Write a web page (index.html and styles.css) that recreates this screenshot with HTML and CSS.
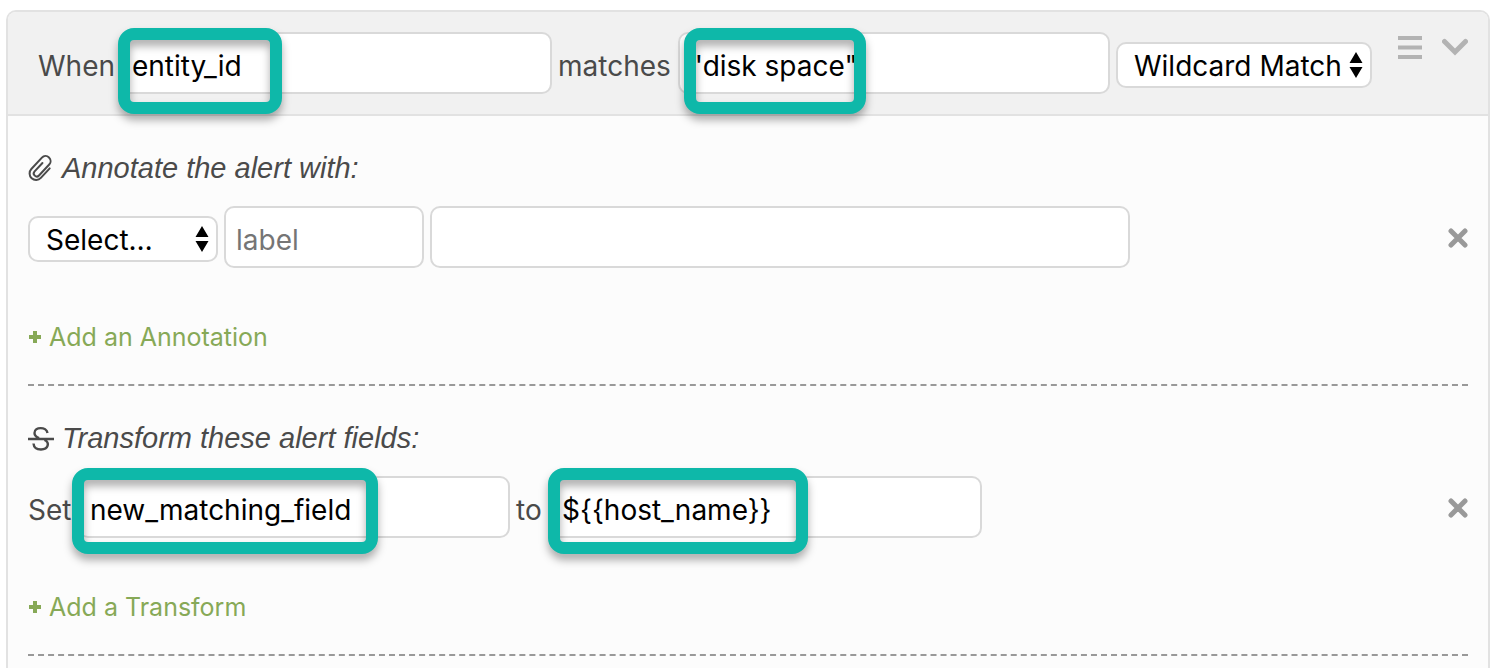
FILE: index.html
```html
<!DOCTYPE html>
<html lang="en">
<head>
<meta charset="utf-8">
<title>Alert rule</title>
<link rel="stylesheet" href="styles.css">
</head>
<body>
<main class="rule">
  <header class="rule-header">
    <div class="row">
      <label class="label-when" for="match-field">When</label>
      <div class="field">
        <input class="text-input" id="match-field" type="text" value="entity_id">
        <span class="highlight highlight-entity"></span>
      </div>
      <label class="label-matches" for="match-value">matches</label>
      <div class="field">
        <input class="text-input" id="match-value" type="text" value="&quot;disk space&quot;">
        <span class="highlight highlight-disk"></span>
      </div>
      <div class="picker picker-match">
        <select class="select" aria-label="Match type"><option>Wildcard Match</option></select>
        <svg class="arrows" viewBox="0 0 14 26" aria-hidden="true"><path d="M7 0l6.500 11H.5zM7 26L.5 15h13z"/></svg>
      </div>
    </div>
    <div class="tools">
      <button class="icon-button" type="button" aria-label="Reorder">
        <svg class="icon-menu" viewBox="0 0 24 24"><path d="M0 2h24M0 11.500h24M0 21h24"/></svg>
      </button>
      <button class="icon-button" type="button" aria-label="Collapse">
        <svg class="icon-chevron" viewBox="0 0 26 24"><path d="M2.500 5.500L13 16 23.500 5.500"/></svg>
      </button>
    </div>
  </header>

  <section class="section">
    <h2 class="title">
      <svg class="icon-title icon-clip" viewBox="0 0 26 28" aria-hidden="true"><path d="M7-6V7A6.500 6.500 0 0 1-6 7V-8.500a5 5 0 0 1 10 0V6.500a3 3 0 0 1-6 0V-5" transform="translate(12.500 14) rotate(43)"/></svg>
      Annotate the alert with:
    </h2>
    <div class="row">
      <div class="picker picker-kind">
        <select class="select" aria-label="Annotation type"><option>Select…</option></select>
        <svg class="arrows" viewBox="0 0 14 26" aria-hidden="true"><path d="M7 0l6.500 11H.5zM7 26L.5 15h13z"/></svg>
      </div>
      <div class="field field-label"><input class="text-input" type="text" placeholder="label" aria-label="Annotation label"></div>
      <div class="field field-value"><input class="text-input" type="text" aria-label="Annotation value"></div>
      <button class="icon-button remove" type="button" aria-label="Remove annotation">
        <svg class="icon-remove" viewBox="0 0 20 20"><path d="M3 3l14 14M17 3L3 17"/></svg>
      </button>
    </div>
    <a class="add" href="#"><svg class="icon-plus" viewBox="0 0 14 14" aria-hidden="true"><path d="M7 1v12M1 7h12"/></svg>Add an Annotation</a>
  </section>

  <section class="section">
    <h2 class="title">
      <svg class="icon-title" viewBox="0 0 26 28" aria-hidden="true"><path d="M0 15h26M19.500 9C18.500 2.500 6.500 2.500 6.500 9c0 2.500 1.800 4 4.500 5.200M16.500 16c5.500 2.500 4 9.500-3.500 9.500-4.500 0-7.200-2.500-7.500-6" stroke-width="2.400"/></svg>
      Transform these alert fields:
    </h2>
    <div class="row">
      <label class="label-set" for="target-field">Set</label>
      <div class="field">
        <input class="text-input" id="target-field" type="text" value="new_matching_field">
        <span class="highlight highlight-target"></span>
      </div>
      <label class="label-to" for="target-value">to</label>
      <div class="field">
        <input class="text-input" id="target-value" type="text" value="${{host_name}}">
        <span class="highlight highlight-host"></span>
      </div>
      <button class="icon-button remove" type="button" aria-label="Remove transform">
        <svg class="icon-remove" viewBox="0 0 20 20"><path d="M3 3l14 14M17 3L3 17"/></svg>
      </button>
    </div>
    <a class="add" href="#"><svg class="icon-plus" viewBox="0 0 14 14" aria-hidden="true"><path d="M7 1v12M1 7h12"/></svg>Add a Transform</a>
  </section>
  <div class="tail"></div>
</main>
</body>
</html>
```
FILE: styles.css
```css
* { box-sizing: border-box; }

html { overflow: hidden; }

body {
  margin: 0;
  padding: 10px 6px 0;
  background: #fff;
  color: #4a4a4a;
  font: 28px/36px Inter, "Liberation Sans", sans-serif;
}

.rule {
  border: 2px solid #e2e2e2;
  border-bottom: 0;
  border-radius: 10px 10px 0 0;
  background: #fcfcfc;
}

.rule-header {
  display: flex;
  justify-content: space-between;
  padding: 20px 20px 20px 30px;
  border-bottom: 2px solid #e2e2e2;
  border-radius: 8px 8px 0 0;
  background: #f1f1f1;
}

.row {
  display: flex;
  align-items: baseline;
}

.label-when { width: 82px; }
.label-matches { width: 126px; padding-left: 6px; }
.label-set { width: 50px; }
.label-to { width: 40px; padding-left: 6px; }

.field {
  position: relative;
  width: 432px;
}
.field-label { width: 200px; margin: 0 6px; }
.field-value { width: 700px; }

.text-input,
.select {
  display: block;
  width: 100%;
  border: 2px solid #d9d9d9;
  border-radius: 10px;
  background: #fff;
  color: #000;
  font: inherit;
}
.text-input {
  height: 62px;
  padding: 6px 10px 0;
}
.text-input::placeholder { color: #757575; opacity: 1; }

.picker { position: relative; }
.picker-match { width: 256px; margin-left: 6px; }
.picker-kind { width: 190px; }

.select {
  height: 46px;
  padding: 2px 16px 0;
  appearance: none;
}

.arrows {
  position: absolute;
  top: 10px;
  right: 9px;
  width: 14px;
  height: 26px;
  pointer-events: none;
}

.highlight {
  position: absolute;
  z-index: 1;
  height: 86px;
  border: 12px solid #0eb8a9;
  border-radius: 16px;
  filter: drop-shadow(0 6px 4px rgba(0, 0, 0, 0.32));
  pointer-events: none;
}
.highlight-entity { top: -4px; left: -2px; width: 164px; }
.highlight-disk { top: -4px; left: 6px; width: 182px; }
.highlight-target { top: -8px; left: -6px; width: 306px; }
.highlight-host { top: -8px; left: -2px; width: 260px; }

.tools {
  display: flex;
  align-items: flex-start;
  gap: 20px;
  padding-top: 4px;
}

.icon-button {
  display: block;
  padding: 0;
  border: 0;
  background: none;
}
.icon-button svg { display: block; fill: none; }

.icon-menu { width: 24px; height: 24px; stroke: #b3b3b3; stroke-width: 4; }
.icon-chevron { width: 26px; height: 24px; stroke: #b3b3b3; stroke-width: 5; stroke-linecap: round; }
.icon-remove { width: 20px; height: 20px; stroke: #999; stroke-width: 5; stroke-linecap: round; }
.remove { align-self: center; margin-left: auto; padding-top: 2px; }

.section {
  margin: 0 20px;
  padding: 34px 0 29px;
  border-bottom: 2px dashed #999;
}

.title {
  display: flex;
  align-items: center;
  gap: 8px;
  margin: 0 0 20px;
  font-family: "Liberation Sans", Arial, sans-serif;
  font-size: 29px;
  font-weight: 400;
  font-style: italic;
}

.icon-title {
  width: 26px;
  height: 28px;
  fill: none;
  stroke: #4a4a4a;
}
.icon-clip { stroke-width: 2; stroke-linecap: round; }

.add {
  display: flex;
  align-items: center;
  gap: 7px;
  width: fit-content;
  margin-top: 51px;
  color: #87a957;
  font-size: 25px;
  text-decoration: none;
}

.icon-plus {
  width: 14px;
  height: 14px;
  fill: none;
  stroke: #87a957;
  stroke-width: 4;
}

.tail { height: 12px; }
```
